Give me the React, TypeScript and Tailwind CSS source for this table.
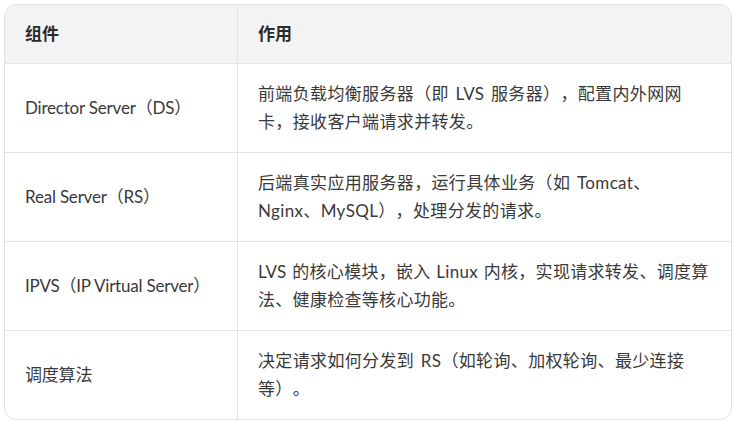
const rows: { name: string; desc: string; tight?: boolean }[] = [
  { name: 'Director Server（DS）', desc: '前端负载均衡服务器（即 LVS 服务器），配置内外网网卡，接收客户端请求并转发。' },
  { name: 'Real Server（RS）', desc: '后端真实应用服务器，运行具体业务（如 Tomcat、Nginx、MySQL），处理分发的请求。' },
  { name: 'IPVS（IP Virtual Server）', desc: 'LVS 的核心模块，嵌入 Linux 内核，实现请求转发、调度算法、健康检查等核心功能。', tight: true },
  { name: '调度算法', desc: '决定请求如何分发到 RS（如轮询、加权轮询、最少连接等）。' },
]

export default function App() {
  return (
    <div className="w-[736px] h-[423px] bg-white p-1 font-['Lato','Noto_Sans_CJK_SC',sans-serif] [text-spacing-trim:space-all]">
      <div className="border border-[#e3e3e3] rounded-xl overflow-hidden">
        <div className="grid grid-cols-[233px_1fr] bg-[#f3f3f3] text-[17px] font-bold text-[#2b2b2b] leading-[28px]">
          <div className="px-5 py-[15px] border-r border-[#e3e3e3]">组件</div>
          <div className="px-5 py-[15px]">作用</div>
        </div>
        {rows.map((row, i) => (
          <div key={i} className="grid grid-cols-[233px_1fr] border-t border-[#e3e3e3] text-[17px] text-[#3a3a3a] leading-[28px]">
            <div className="px-5 py-4 border-r border-[#e3e3e3] flex items-center tracking-[-0.2px]">{row.name}</div>
            <div
              className={
                row.tight
                  ? 'px-5 py-4 tracking-[0.3px] [word-spacing:1px]'
                  : 'px-5 py-4 tracking-[0.35px] [word-spacing:2px]'
              }
            >
              {row.desc}
            </div>
          </div>
        ))}
      </div>
    </div>
  )
}
